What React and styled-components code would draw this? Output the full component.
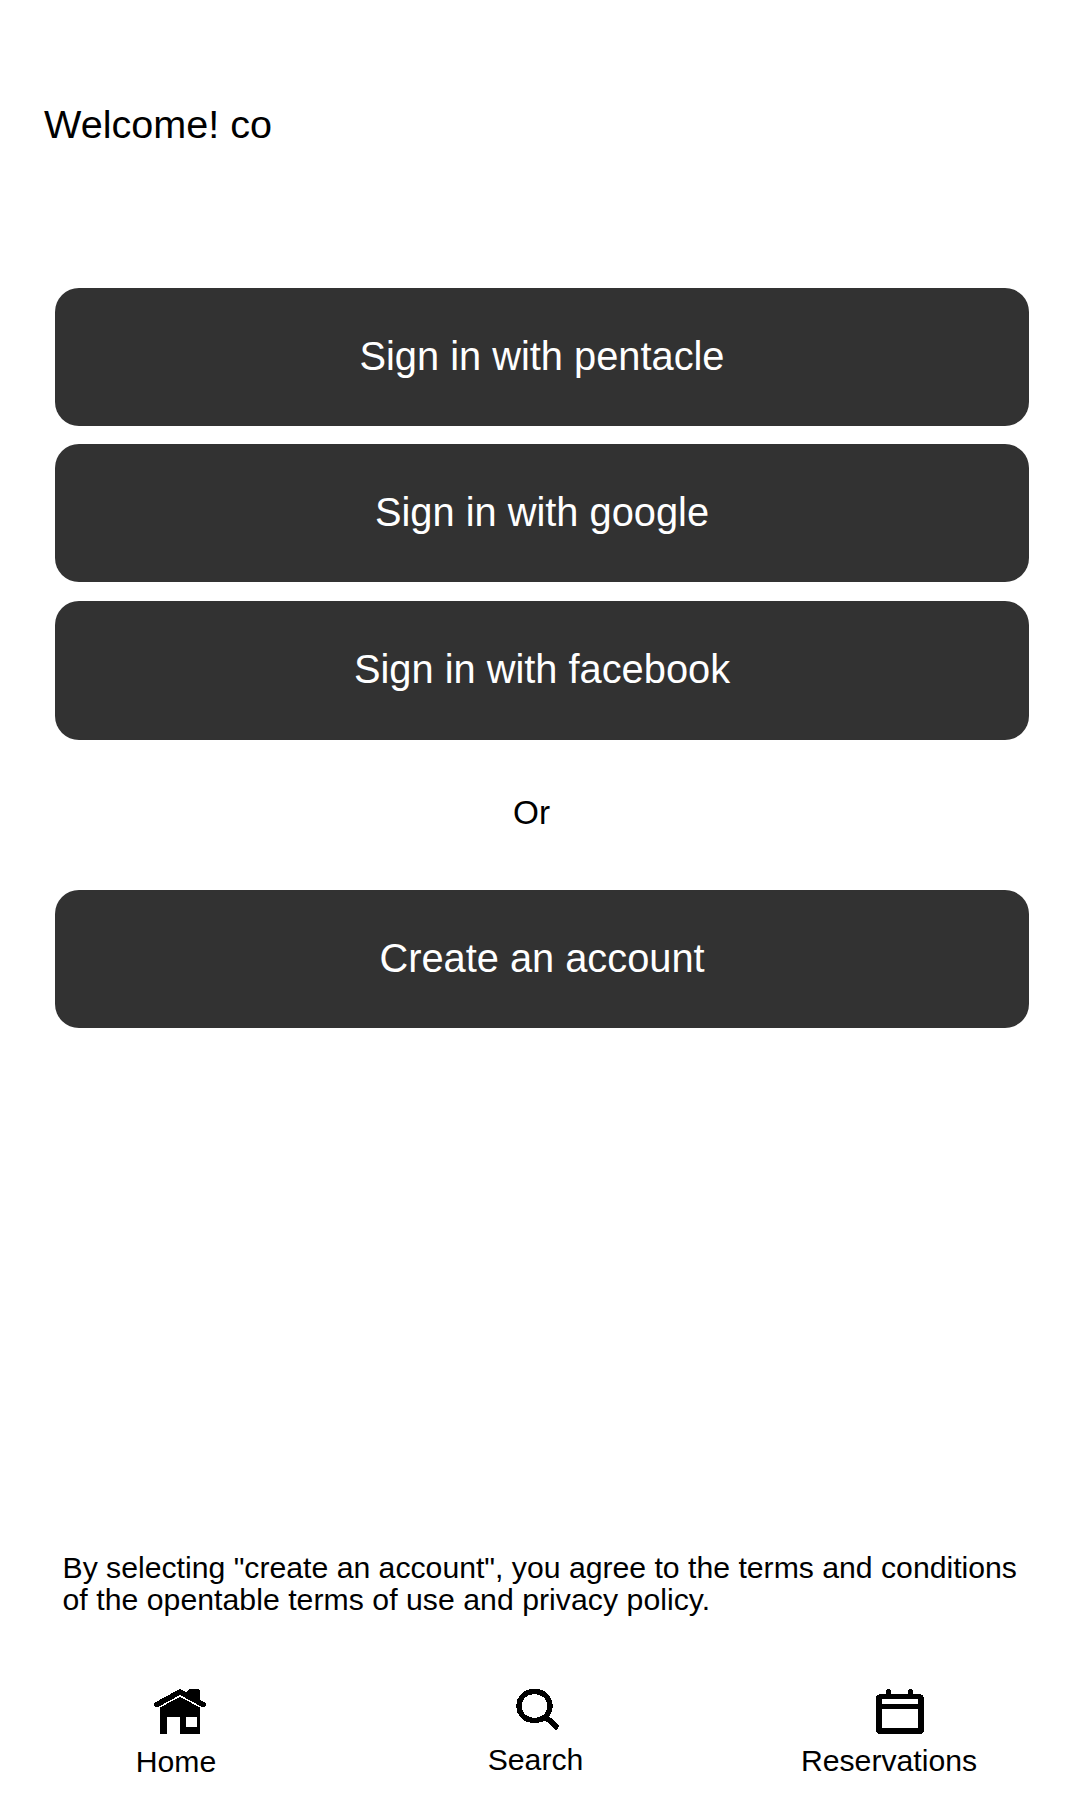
import React from "react";
import styled, { createGlobalStyle } from "styled-components";

const GlobalStyle = createGlobalStyle`
  * { box-sizing: border-box; }
  body { margin: 0; background: #fff; }
`;

const Screen = styled.main`
  display: flex;
  flex-direction: column;
  width: 1080px;
  height: 1800px;
  padding: 101px 51px 0 55px;
  overflow: hidden;
  background: #fff;
  color: #000;
  font-family: "Liberation Sans", Arial, sans-serif;
`;

const Title = styled.h1`
  margin: 0 0 141px -11px;
  font-size: 39.6px;
  font-weight: 400;
  line-height: 46px;
`;

const Actions = styled.div`
  display: flex;
  flex-direction: column;
  gap: 18px;
`;

const Button = styled.button`
  width: 100%;
  height: ${(p) => p.$height || 138}px;
  margin: ${(p) => p.$offset || 0}px 0 0;
  padding: 0 0 ${(p) => p.$lift || 2}px;
  border: 0;
  border-radius: 24px;
  background: #323232;
  color: #fff;
  font: 400 39.8px/46px "Liberation Sans", Arial, sans-serif;
  text-align: center;
`;

const Divider = styled.p`
  margin: 53px 0 57px;
  padding-right: 21px;
  font-size: 33.3px;
  line-height: 40px;
  text-align: center;
`;

const Terms = styled.p`
  margin: auto 0 0 7.5px;
  font-size: 30.2px;
  line-height: 32px;
  white-space: nowrap;
`;

const TermsLine = styled.span`
  display: block;
  letter-spacing: ${(p) => p.$tracking || 0}px;
`;

const Nav = styled.nav`
  display: grid;
  grid-template-columns: 242px 477px 230px;
  height: 184px;
  padding-top: 73px;
`;

const NavItem = styled.a`
  display: flex;
  flex-direction: column;
  align-items: center;
  gap: ${(p) => p.$gap}px;
  font-size: 30.2px;
  line-height: 34px;

  svg {
    display: block;
    margin-left: ${(p) => p.$shift}px;
  }
`;

const HomeIcon = () => (
  <svg width="52" height="46" viewBox="0 0 52 46" shapeRendering="crispEdges">
    <path d="M2.7 15.6 26 2.9l23.3 12.7" fill="none" stroke="#000" strokeWidth="5.4" strokeLinecap="round" strokeLinejoin="round" />
    <path d="M32.5 3 35 0h9l2 2v11L33 6Z" />
    <path fillRule="evenodd" d="M6 18.6 26 7.7l20 10.9V45H28q-2 0-2-2V28H13v17H6ZM32 28v10h11V28Z" />
  </svg>
);

const SearchIcon = () => (
  <svg width="45" height="42" viewBox="0 0 45 42" shapeRendering="crispEdges">
    <path d="M18.5 2.6C28 2.6 34 9 34 17S28 31.4 18.5 31.4 3 25 3 17 9 2.6 18.5 2.6Z" fill="none" stroke="#000" strokeWidth="5.4" />
    <path d="m28.5 27 13.5 12" stroke="#000" strokeWidth="5.6" />
  </svg>
);

const CalendarIcon = () => (
  <svg width="48" height="45" viewBox="0 0 48 45" shapeRendering="crispEdges">
    <path fillRule="evenodd" d="M5 5h5V2.5a2.5 2.5 0 0 1 5 0V5h17V2.5a2.5 2.5 0 0 1 5 0V5h6q5 0 5 5v30q0 5-5 5H5q-5 0-5-5V10q0-5 5-5ZM6 10v5h36v-5ZM6 20v19h36V20Z" />
  </svg>
);

export default function App() {
  return (
    <>
      <GlobalStyle />
      <Screen>
        <Title>Welcome! co</Title>
        <Actions>
          <Button>Sign in with pentacle</Button>
          <Button>Sign in with google</Button>
          <Button $height={139} $offset={1} $lift={4}>Sign in with facebook</Button>
        </Actions>
        <Divider>Or</Divider>
        <Button>Create an account</Button>
        <Terms>
          <TermsLine>By selecting "create an account", you agree to the terms and conditions</TermsLine>
          <TermsLine $tracking={0.045}>of the opentable terms of use and privacy policy.</TermsLine>
        </Terms>
        <Nav>
          <NavItem $gap={10} $shift={8}>
            <HomeIcon />
            Home
          </NavItem>
          <NavItem $gap={12} $shift={6}>
            <SearchIcon />
            Search
          </NavItem>
          <NavItem $gap={10} $shift={22}>
            <CalendarIcon />
            Reservations
          </NavItem>
        </Nav>
      </Screen>
    </>
  );
}
